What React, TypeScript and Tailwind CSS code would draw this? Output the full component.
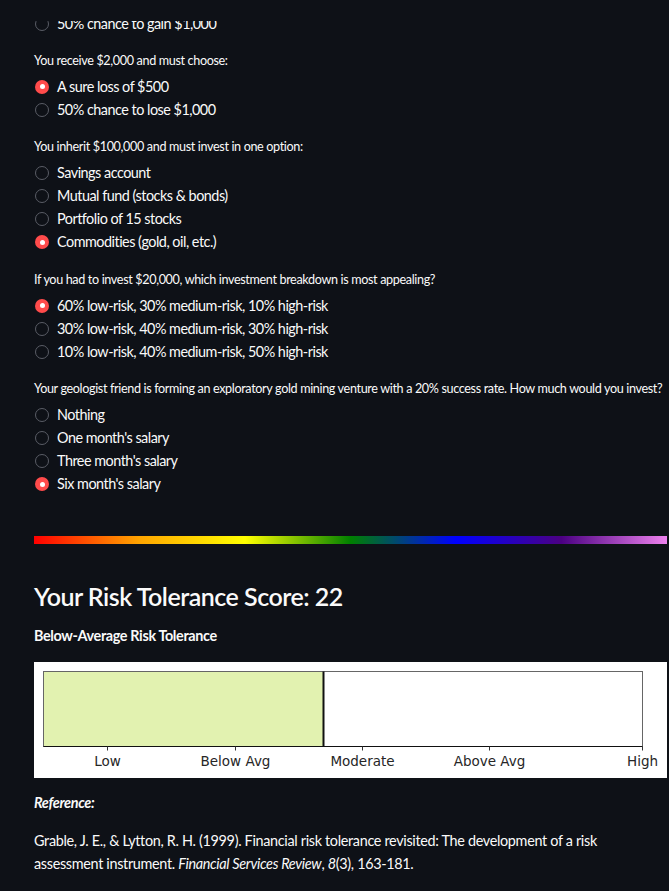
const questions = [
    {
        label: "You receive $2,000 and must choose:",
        options: ["A sure loss of $500", "50% chance to lose $1,000"],
        selected: 0,
    },
    {
        label: "You inherit $100,000 and must invest in one option:",
        options: [
            "Savings account",
            "Mutual fund (stocks & bonds)",
            "Portfolio of 15 stocks",
            "Commodities (gold, oil, etc.)",
        ],
        selected: 3,
    },
    {
        label: "If you had to invest $20,000, which investment breakdown is most appealing?",
        options: [
            "60% low-risk, 30% medium-risk, 10% high-risk",
            "30% low-risk, 40% medium-risk, 30% high-risk",
            "10% low-risk, 40% medium-risk, 50% high-risk",
        ],
        selected: 0,
    },
    {
        label: "Your geologist friend is forming an exploratory gold mining venture with a 20% success rate. How much would you invest?",
        options: ["Nothing", "One month's salary", "Three month's salary", "Six month's salary"],
        selected: 3,
    },
];

function Radio({ text, checked }: { text: string; checked: boolean }) {
    return (
        <div className="flex h-[23px] items-center">
            <span
                className={`ml-[1px] flex h-[14px] w-[14px] items-center justify-center rounded-full ${
                    checked ? "bg-[#ff4b4b]" : "border border-[#5a5d66]"
                }`}
            >
                {checked && <span className="h-[5px] w-[5px] rounded-full bg-white" />}
            </span>
            <span className="ml-[8px] whitespace-nowrap text-[14.4px] tracking-[-0.5px] text-[#fafafa]">{text}</span>
        </div>
    );
}

function ScoreChart() {
    // plot area 599 wide, score marker at 280
    const ticks = [
        { x: 64, label: "Low" },
        { x: 192, label: "Below Avg" },
        { x: 319, label: "Moderate" },
        { x: 446, label: "Above Avg" },
        { x: 599, label: "High" },
    ];
    return (
        <div className="h-[116px] w-[633px] bg-white">
            <svg width="633" height="116" viewBox="0 0 633 116">
                <g transform="translate(9.5 9.5)">
                    <rect x="0" y="0" width="280" height="75" fill="#e2f2b0" />
                    <rect x="0" y="0" width="599" height="75" fill="none" stroke="#666" strokeWidth="1" />
                    <line x1="0" y1="75" x2="599" y2="75" stroke="#111" strokeWidth="1.2" />
                    <line x1="280" y1="0" x2="280" y2="75" stroke="#111" strokeWidth="2" />
                    {ticks.map((t) => (
                        <g key={t.label}>
                            <line x1={t.x} y1="75" x2={t.x} y2="79" stroke="#333" strokeWidth="1" />
                            <text
                                x={t.x}
                                y="94.5"
                                textAnchor="middle"
                                fontFamily="'DejaVu Sans', sans-serif"
                                fontSize="13.5"
                                fill="#262626"
                            >
                                {t.label}
                            </text>
                        </g>
                    ))}
                </g>
            </svg>
        </div>
    );
}

export default function App() {
    return (
        <div className="relative min-h-[891px] overflow-hidden bg-[#0e1117] pl-[34px] pr-[2px] pt-[12.5px] font-['Lato','Noto_Sans',sans-serif] text-[#fafafa]">
            {/* header strip covering the scrolled content */}
            <div className="absolute left-0 right-0 top-0 h-[21px] bg-[#0e1117]" />

            <Radio text="50% chance to gain $1,000" checked={false} />

            <div className="mt-[15px] flex flex-col gap-[16px]">
                {questions.map((q) => (
                    <div key={q.label}>
                        <p className="mb-[4.5px] whitespace-nowrap text-[12.6px] leading-[20px] tracking-[-0.35px]">
                            {q.label}
                        </p>
                        {q.options.map((o, i) => (
                            <Radio key={o} text={o} checked={i === q.selected} />
                        ))}
                    </div>
                ))}
            </div>

            <div className="mt-[40px] h-[8px] w-[633px] bg-[linear-gradient(to_right,red,orange,yellow,green,blue,indigo,violet)]" />

            <h3 className="mt-[36px] text-[25px] font-semibold leading-[32px] tracking-[-0.5px]">
                Your Risk Tolerance Score: 22
            </h3>

            <p className="mt-[14px] text-[14.4px] font-bold leading-[20px] tracking-[-0.36px]">
                Below-Average Risk Tolerance
            </p>

            <div className="mt-[16px]">
                <ScoreChart />
            </div>

            <p className="mt-[15px] text-[14.4px] font-bold italic leading-[20px] tracking-[-0.3px]">Reference:</p>

            <p className="mt-[16.5px] text-[14.4px] leading-[23px] tracking-[-0.32px]">
                Grable, J. E., &amp; Lytton, R. H. (1999). Financial risk tolerance revisited: The development of a risk
                <br />
                assessment instrument. <i>Financial Services Review</i>, <i>8</i>(3), 163-181.
            </p>
        </div>
    );
}
